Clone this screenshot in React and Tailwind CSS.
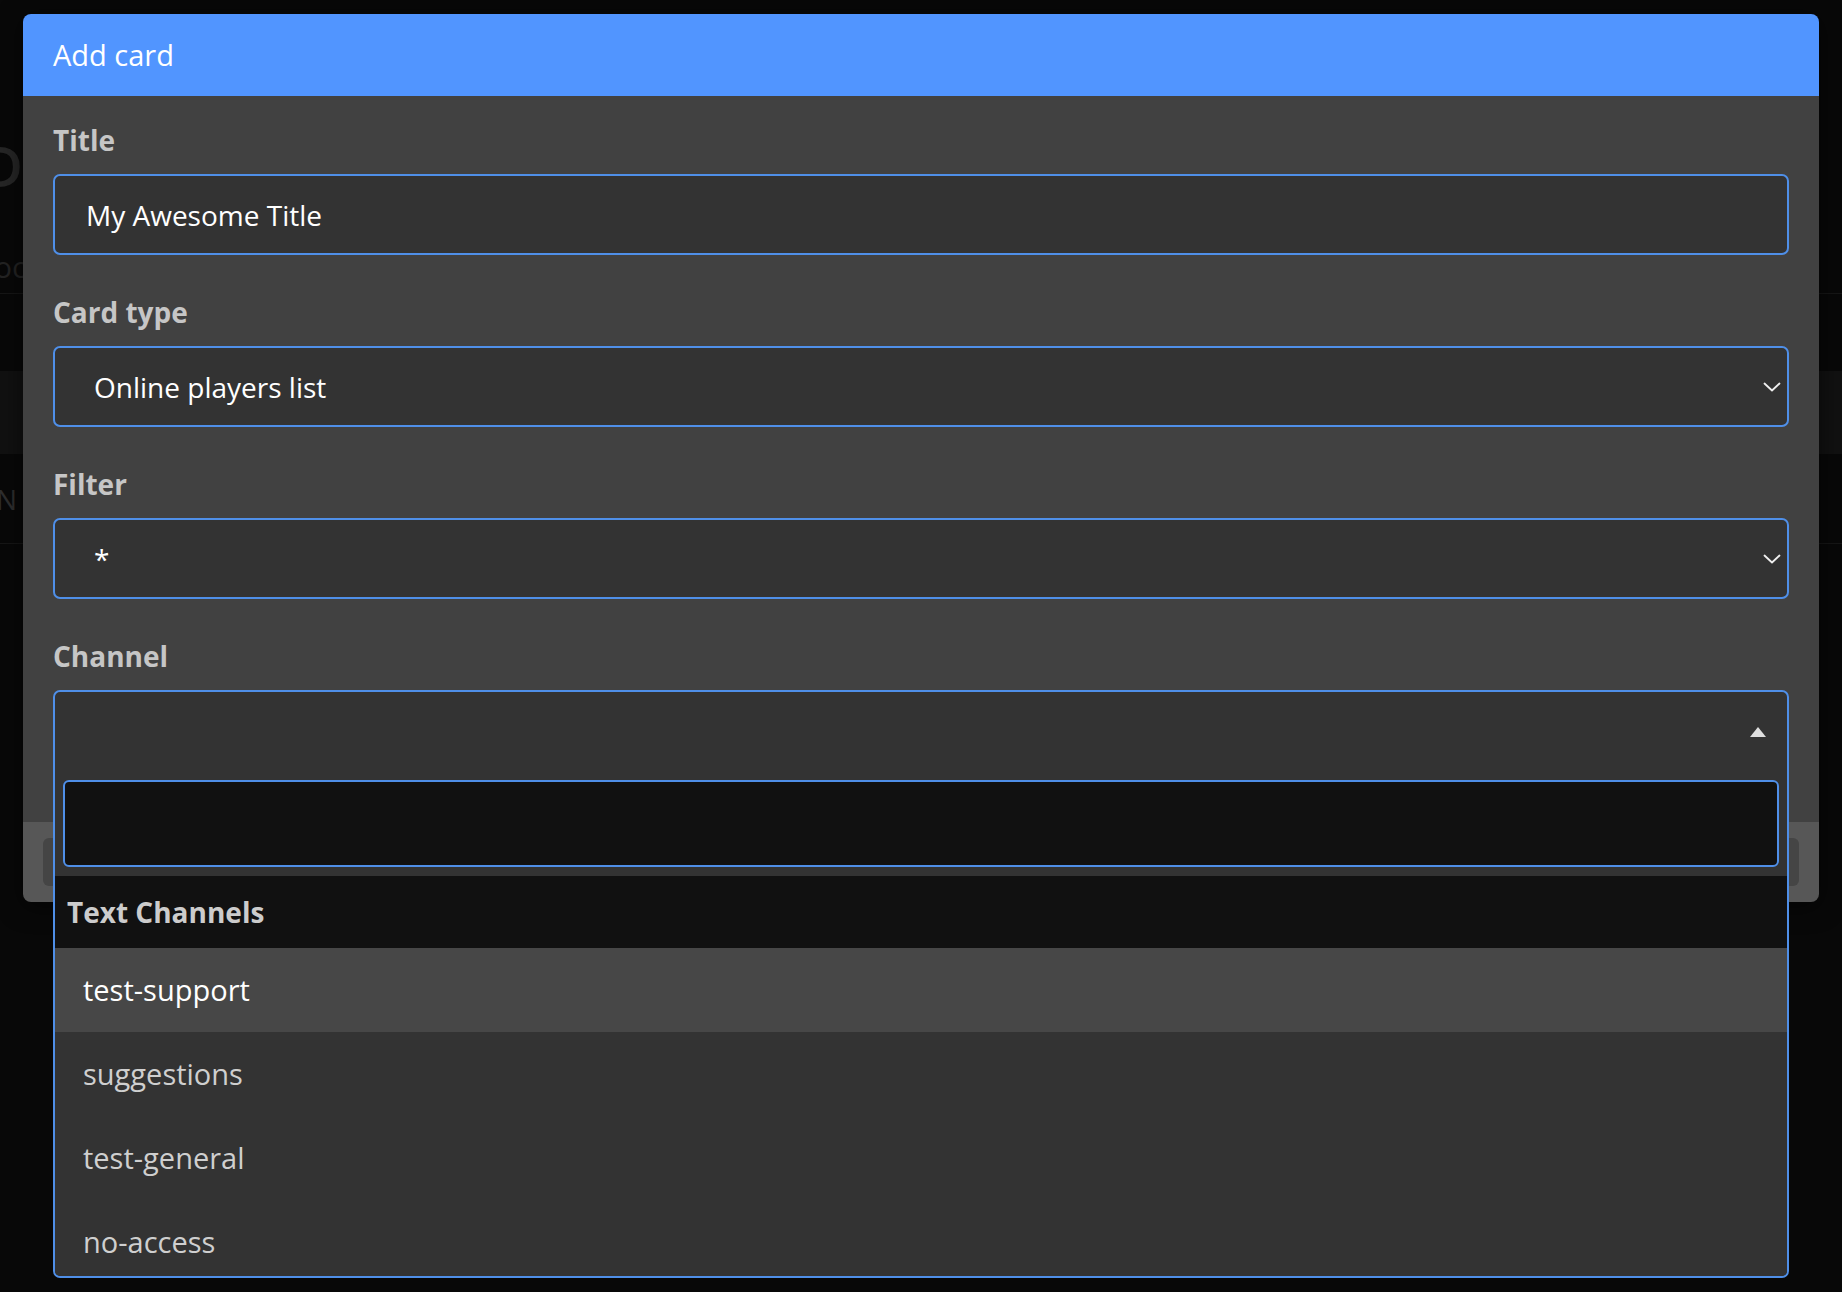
const Chevron = () => (
  <svg width="18" height="10" viewBox="0 0 18 10" fill="none" className="shrink-0">
    <path d="M1.5 1.5 L9 8.5 L16.5 1.5" stroke="#f0f0f0" strokeWidth="1.8" strokeLinecap="round" strokeLinejoin="round" />
  </svg>
);

const TriangleUp = () => (
  <svg width="16" height="10" viewBox="0 0 16 10" className="shrink-0">
    <polygon points="0,10 8,0 16,10" fill="#dedede" />
  </svg>
);

function Label({ children, first }) {
  return (
    <div
      className={
        first
          ? "h-[36px] text-[28px] leading-[36px] font-bold text-[#c6c6c6]"
          : "mt-[39px] h-[36px] text-[28px] leading-[36px] font-bold text-[#c6c6c6]"
      }
    >
      {children}
    </div>
  );
}

function SelectBox({ value }) {
  return (
    <div className="mt-[16px] h-[81px] rounded-[7px] border-2 border-[#4f8fe8] bg-[#333333] flex items-center justify-between pl-[39px] pr-[6px] text-[28px] leading-[36px] text-white">
      <span>{value}</span>
      <Chevron />
    </div>
  );
}

const channels = ["test-support", "suggestions", "test-general", "no-access"];

export default function App() {
  return (
    <div className="relative w-full h-[1292px] overflow-hidden bg-[#080808] font-['Open_Sans',sans-serif]">
      {/* dimmed page behind the modal */}
      <div className="flex flex-col">
        <div className="h-[133px]" />
        <div className="-ml-[18px] h-[64px] text-[56px] leading-[64px] font-semibold text-[#262626] whitespace-nowrap">
          Dashboard
        </div>
        <div className="mt-[50px] -ml-[6px] h-[40px] text-[30px] leading-[40px] text-[#232323] whitespace-nowrap">
          oo
        </div>
        <div className="mt-[6px] border-b border-[#161616]" />
        <div className="h-[77px]" />
        <div className="h-[83px] bg-[#111111]" />
        <div className="h-[90px] flex items-center -ml-[4px] text-[28px] text-[#2e2e2e] border-b border-[#161616] whitespace-nowrap">
          N
        </div>
      </div>

      {/* modal */}
      <div className="absolute left-[23px] top-[14px] w-[1796px] rounded-[8px] shadow-[0_4px_24px_rgba(0,0,0,0.6)]">
        <div className="h-[82px] rounded-t-[8px] bg-[#5195ff] flex items-center pl-[30px] text-[29px] leading-[36px] text-white">
          Add card
        </div>

        <div className="bg-[#414141] px-[30px] pt-[26px] pb-[51px]">
          <Label first>Title</Label>
          <div className="mt-[16px] h-[81px] rounded-[7px] border-2 border-[#4f8fe8] bg-[#333333] flex items-center pl-[31px] text-[28px] leading-[36px] text-white">
            My Awesome Title
          </div>

          <Label>Card type</Label>
          <SelectBox value="Online players list" />

          <Label>Filter</Label>
          <SelectBox value="*" />

          <Label>Channel</Label>
          <div className="relative mt-[16px] h-[81px]">
            <div className="absolute left-0 right-0 top-0 z-10 h-[588px] rounded-[7px] border-2 border-[#4f8fe8] bg-[#333333] flex flex-col overflow-hidden">
              <div className="h-[80px] shrink-0 flex items-center justify-end pr-[21px]">
                <TriangleUp />
              </div>
              <div className="shrink-0 px-[8px] pt-[8px] pb-[9px]">
                <div className="h-[87px] rounded-[6px] border-2 border-[#4f8fe8] bg-[#111111]" />
              </div>
              <div className="h-[72px] shrink-0 bg-[#111111] flex items-center pl-[12px] text-[28px] leading-[36px] font-bold text-[#cccccc]">
                Text Channels
              </div>
              <div className="flex-1 overflow-hidden">
                {channels.map((c, i) => (
                  <div
                    key={c}
                    className={
                      i === 0
                        ? "h-[84px] flex items-center pl-[28px] bg-[#474747] text-[29px] leading-[36px] text-white"
                        : "h-[84px] flex items-center pl-[28px] bg-[#333333] text-[29px] leading-[36px] text-[#cfcfcf]"
                    }
                  >
                    {c}
                  </div>
                ))}
              </div>
            </div>
          </div>
        </div>

        <div className="h-[80px] rounded-b-[8px] bg-[#575757] flex items-center justify-between px-[20px]">
          <button className="h-[48px] w-[140px] rounded-[6px] bg-[#454545] text-[24px] text-[#dddddd]">Cancel</button>
          <button className="h-[48px] w-[140px] rounded-[6px] bg-[#454545] text-[24px] text-[#dddddd]">Add</button>
        </div>
      </div>
    </div>
  );
}
